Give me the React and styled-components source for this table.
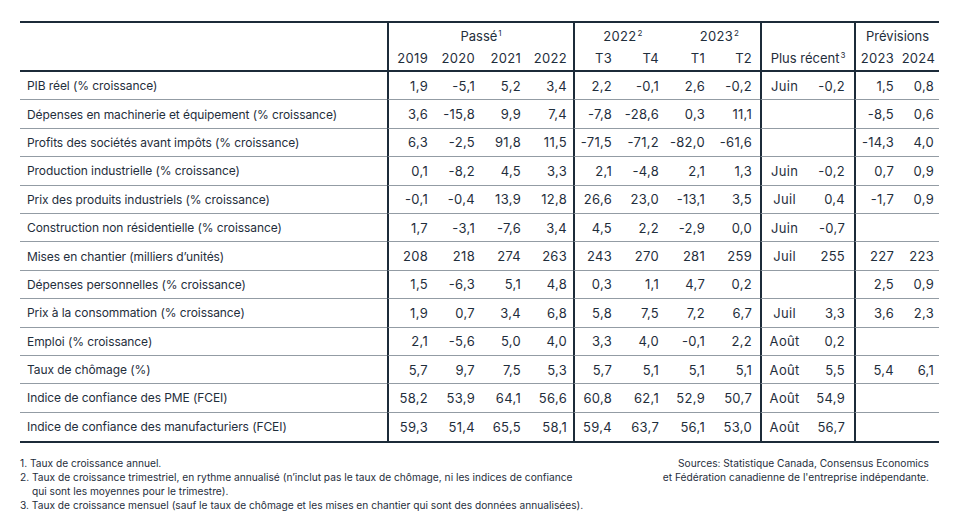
import React from 'react';
import styled, { createGlobalStyle } from 'styled-components';

const GlobalStyle = createGlobalStyle`
  html, body {
    margin: 0;
    padding: 0;
    background: #ffffff;
  }
  body {
    font-family: Inter, "Liberation Sans", Arial, sans-serif;
    color: #1f2e3c;
  }
`;

const Page = styled.div`
  width: 960px;
  box-sizing: border-box;
  padding: 21px 21px 0 20px;
`;

const Table = styled.table`
  width: 919px;
  table-layout: fixed;
  border-collapse: separate;
  border-spacing: 0;
  border-top: 2px solid #1c2b39;
  border-bottom: 2px solid #1c2b39;
  font-size: 13px;
  color: #1f2e3c;
`;

const HeadCell = styled.th`
  font-weight: 400;
  padding: 0 ${(p) => p.$padRight || 0}px 0 ${(p) => p.$padLeft || 0}px;
  text-align: ${(p) => p.$align || 'center'};
  border-left: ${(p) => (p.$sep ? '2px solid #1c2b39' : 'none')};
  border-bottom: ${(p) => (p.$last ? '2px solid #1c2b39' : 'none')};
  letter-spacing: ${(p) => (p.$num ? '0.3px' : '0')};
  white-space: nowrap;
  vertical-align: middle;
`;

const TopRow = styled.tr`
  height: 23px;
  & > th {
    padding-top: 3px;
  }
`;

const SubRow = styled.tr`
  height: 26px;
`;

const BodyRow = styled.tr`
  height: 28.4px;
  &:last-child > td {
    border-bottom: none;
  }
`;

const LabelCell = styled.td`
  padding: 0 0 0 7px;
  text-align: left;
  font-size: 12px;
  letter-spacing: -0.08px;
  white-space: nowrap;
  border-bottom: 1px solid #939ca4;
`;

const NumCell = styled.td`
  padding: 0 ${(p) => p.$pad}px 0 0;
  text-align: ${(p) => p.$align || 'right'};
  letter-spacing: 0.3px;
  white-space: nowrap;
  border-left: ${(p) => (p.$sep ? '2px solid #1c2b39' : 'none')};
  border-bottom: 1px solid #939ca4;
`;

const Sup = styled.sup`
  font-size: 8px;
  line-height: 0;
  vertical-align: 5px;
  margin-left: 1px;
`;

const Footer = styled.div`
  display: flex;
  justify-content: space-between;
  align-items: flex-start;
  width: 919px;
  margin-top: 13px;
  font-size: 10.2px;
  line-height: 14px;
  color: #1f2e3c;
`;

const Notes = styled.ol`
  list-style: none;
  margin: 0;
  padding: 0;
`;

const Note = styled.li`
  padding-left: 12px;
  text-indent: -12px;
`;

const Sources = styled.div`
  text-align: right;
  padding-right: 10px;
`;

// colonnes: largeur, marge droite, séparateur épais à gauche
const columns = [
  { w: 46, pad: 5, sep: true },
  { w: 47, pad: 5 },
  { w: 46, pad: 5 },
  { w: 47, pad: 6 },
  { w: 47, pad: 8, sep: true },
  { w: 47, pad: 8 },
  { w: 46, pad: 8 },
  { w: 47, pad: 8 },
  { w: 47, pad: 0, sep: true, align: 'center' },
  { w: 47, pad: 9 },
  { w: 43, pad: 3, sep: true },
  { w: 42, pad: 5 },
];

const rows = [
  ['PIB réel (% croissance)', '1,9', '-5,1', '5,2', '3,4', '2,2', '-0,1', '2,6', '-0,2', 'Juin', '-0,2', '1,5', '0,8'],
  ['Dépenses en machinerie et équipement (% croissance)', '3,6', '-15,8', '9,9', '7,4', '-7,8', '-28,6', '0,3', '11,1', '', '', '-8,5', '0,6'],
  ['Profits des sociétés avant impôts (% croissance)', '6,3', '-2,5', '91,8', '11,5', '-71,5', '-71,2', '-82,0', '-61,6', '', '', '-14,3', '4,0'],
  ['Production industrielle (% croissance)', '0,1', '-8,2', '4,5', '3,3', '2,1', '-4,8', '2,1', '1,3', 'Juin', '-0,2', '0,7', '0,9'],
  ['Prix des produits industriels (% croissance)', '-0,1', '-0,4', '13,9', '12,8', '26,6', '23,0', '-13,1', '3,5', 'Juil', '0,4', '-1,7', '0,9'],
  ['Construction non résidentielle (% croissance)', '1,7', '-3,1', '-7,6', '3,4', '4,5', '2,2', '-2,9', '0,0', 'Juin', '-0,7', '', ''],
  ['Mises en chantier (milliers d’unités)', '208', '218', '274', '263', '243', '270', '281', '259', 'Juil', '255', '227', '223'],
  ['Dépenses personnelles (% croissance)', '1,5', '-6,3', '5,1', '4,8', '0,3', '1,1', '4,7', '0,2', '', '', '2,5', '0,9'],
  ['Prix à la consommation (% croissance)', '1,9', '0,7', '3,4', '6,8', '5,8', '7,5', '7,2', '6,7', 'Juil', '3,3', '3,6', '2,3'],
  ['Emploi (% croissance)', '2,1', '-5,6', '5,0', '4,0', '3,3', '4,0', '-0,1', '2,2', 'Août', '0,2', '', ''],
  ['Taux de chômage (%)', '5,7', '9,7', '7,5', '5,3', '5,7', '5,1', '5,1', '5,1', 'Août', '5,5', '5,4', '6,1'],
  ['Indice de confiance des PME (FCEI)', '58,2', '53,9', '64,1', '56,6', '60,8', '62,1', '52,9', '50,7', 'Août', '54,9', '', ''],
  ['Indice de confiance des manufacturiers (FCEI)', '59,3', '51,4', '65,5', '58,1', '59,4', '63,7', '56,1', '53,0', 'Août', '56,7', '', ''],
];

const App = () => (
  <Page>
    <GlobalStyle />
    <Table>
      <colgroup>
        <col style={{ width: 367 }} />
        {columns.map((c, i) => (
          <col key={i} style={{ width: c.w }} />
        ))}
      </colgroup>
      <thead>
        <TopRow>
          <HeadCell rowSpan={2} $last />
          <HeadCell colSpan={4} $sep>
            Passé<Sup>1</Sup>
          </HeadCell>
          <HeadCell colSpan={2} $sep $padLeft={4} $num>
            2022<Sup>2</Sup>
          </HeadCell>
          <HeadCell colSpan={2} $padLeft={12} $num>
            2023<Sup>2</Sup>
          </HeadCell>
          <HeadCell colSpan={2} $sep />
          <HeadCell colSpan={2} $sep>
            Prévisions
          </HeadCell>
        </TopRow>
        <SubRow>
          {['2019', '2020', '2021', '2022', 'T3', 'T4', 'T1', 'T2'].map((h, i) => (
            <HeadCell key={h + i} $sep={columns[i].sep} $align="right" $padRight={columns[i].pad} $last $num>
              {h}
            </HeadCell>
          ))}
          <HeadCell colSpan={2} $sep $last>
            Plus récent<Sup>3</Sup>
          </HeadCell>
          <HeadCell $sep $align="right" $padRight={3} $last $num>
            2023
          </HeadCell>
          <HeadCell $align="right" $padRight={4} $last $num>
            2024
          </HeadCell>
        </SubRow>
      </thead>
      <tbody>
        {rows.map((r) => (
          <BodyRow key={r[0]}>
            <LabelCell>{r[0]}</LabelCell>
            {r.slice(1).map((v, i) => (
              <NumCell key={i} $pad={columns[i].pad} $sep={columns[i].sep} $align={columns[i].align}>
                {v}
              </NumCell>
            ))}
          </BodyRow>
        ))}
      </tbody>
    </Table>
    <Footer>
      <Notes>
        <Note>1. Taux de croissance annuel.</Note>
        <Note>
          2. Taux de croissance trimestriel, en rythme annualisé (n’inclut pas le taux de chômage, ni les indices de confiance
          <br />
          qui sont les moyennes pour le trimestre).
        </Note>
        <Note>
          3. Taux de croissance mensuel (sauf le taux de chômage et les mises en chantier qui sont des données annualisées).
        </Note>
      </Notes>
      <Sources>
        Sources: Statistique Canada, Consensus Economics
        <br />
        et Fédération canadienne de l'entreprise indépendante.
      </Sources>
    </Footer>
  </Page>
);

export default App;
